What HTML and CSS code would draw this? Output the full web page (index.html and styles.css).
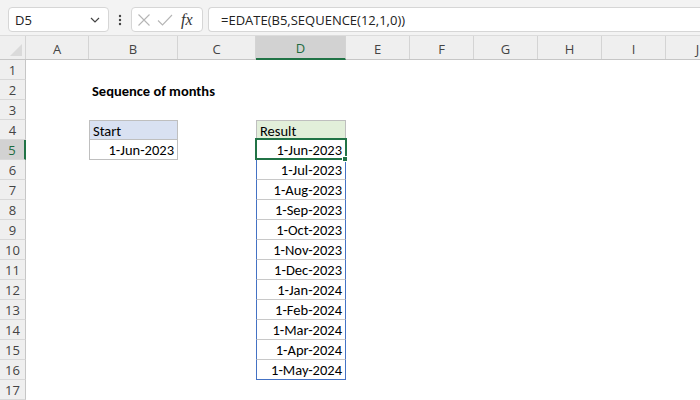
FILE: index.html
```html
<!DOCTYPE html>
<html>
<head>
<meta charset="utf-8">
<link rel="stylesheet" href="styles.css">
</head>
<body>
<div class="app">
  <div class="toolbar">
    <div class="namebox">
      <span class="ref">D5</span>
      <svg class="chev" width="10" height="6" viewBox="0 0 10 6"><path d="M1 1 L5 5 L9 1" fill="none" stroke="#444" stroke-width="1.2"/></svg>
    </div>
    <div class="dots">
      <svg width="4" height="12" viewBox="0 0 4 12"><circle cx="2" cy="2" r="1.2" fill="#444"/><circle cx="2" cy="6" r="1.2" fill="#444"/><circle cx="2" cy="10" r="1.2" fill="#444"/></svg>
    </div>
    <div class="fxbox">
      <svg class="ico" width="14" height="14" viewBox="0 0 14 14"><path d="M1.5 1.5 L12.5 12.5 M12.5 1.5 L1.5 12.5" stroke="#b5b5b5" stroke-width="1.1" fill="none"/></svg>
      <svg class="ico" width="16" height="14" viewBox="0 0 16 14"><path d="M1 7.5 L5.5 12 L15 2" stroke="#b5b5b5" stroke-width="1.1" fill="none"/></svg>
      <span class="fx">fx</span>
    </div>
    <div class="formula">=EDATE(B5,SEQUENCE(12,1,0))</div>
  </div>

  <div class="colheads">
    <div class="corner">
      <svg width="12" height="12" viewBox="0 0 12 12"><path d="M12 0 L12 12 L0 12 Z" fill="#dadada"/></svg>
    </div>
    <div class="ch ca">A</div>
    <div class="ch cb">B</div>
    <div class="ch cc">C</div>
    <div class="ch cd sel">D</div>
    <div class="ch ce">E</div>
    <div class="ch ce">F</div>
    <div class="ch ce">G</div>
    <div class="ch ce">H</div>
    <div class="ch ce">I</div>
    <div class="ch ce">J</div>
  </div>

  <div class="sheet">
    <div class="row"><div class="rh">1</div><div class="c ca"></div><div class="c cb"></div><div class="c cc"></div><div class="c cd"></div></div>
    <div class="row"><div class="rh">2</div><div class="c ca"></div><div class="c cb title">Sequence of months</div><div class="c cc"></div><div class="c cd"></div></div>
    <div class="row"><div class="rh">3</div><div class="c ca"></div><div class="c cb"></div><div class="c cc"></div><div class="c cd"></div></div>
    <div class="row"><div class="rh">4</div><div class="c ca"></div><div class="c cb hdr-blue">Start</div><div class="c cc"></div><div class="c cd hdr-green">Result</div></div>
    <div class="row"><div class="rh selrow">5</div><div class="c ca"></div><div class="c cb box num">1-Jun-2023</div><div class="c cc"></div><div class="c cd spill num active">1-Jun-2023</div></div>
    <div class="row"><div class="rh">6</div><div class="c ca"></div><div class="c cb"></div><div class="c cc"></div><div class="c cd spill num">1-Jul-2023</div></div>
    <div class="row"><div class="rh">7</div><div class="c ca"></div><div class="c cb"></div><div class="c cc"></div><div class="c cd spill num">1-Aug-2023</div></div>
    <div class="row"><div class="rh">8</div><div class="c ca"></div><div class="c cb"></div><div class="c cc"></div><div class="c cd spill num">1-Sep-2023</div></div>
    <div class="row"><div class="rh">9</div><div class="c ca"></div><div class="c cb"></div><div class="c cc"></div><div class="c cd spill num">1-Oct-2023</div></div>
    <div class="row"><div class="rh">10</div><div class="c ca"></div><div class="c cb"></div><div class="c cc"></div><div class="c cd spill num">1-Nov-2023</div></div>
    <div class="row"><div class="rh">11</div><div class="c ca"></div><div class="c cb"></div><div class="c cc"></div><div class="c cd spill num">1-Dec-2023</div></div>
    <div class="row"><div class="rh">12</div><div class="c ca"></div><div class="c cb"></div><div class="c cc"></div><div class="c cd spill num">1-Jan-2024</div></div>
    <div class="row"><div class="rh">13</div><div class="c ca"></div><div class="c cb"></div><div class="c cc"></div><div class="c cd spill num">1-Feb-2024</div></div>
    <div class="row"><div class="rh">14</div><div class="c ca"></div><div class="c cb"></div><div class="c cc"></div><div class="c cd spill num">1-Mar-2024</div></div>
    <div class="row"><div class="rh">15</div><div class="c ca"></div><div class="c cb"></div><div class="c cc"></div><div class="c cd spill num">1-Apr-2024</div></div>
    <div class="row"><div class="rh">16</div><div class="c ca"></div><div class="c cb"></div><div class="c cc"></div><div class="c cd spill last num">1-May-2024</div></div>
    <div class="row"><div class="rh">17</div><div class="c ca"></div><div class="c cb"></div><div class="c cc"></div><div class="c cd"></div></div>
  </div>
</div>
</body>
</html>
```

FILE: styles.css
```css
html, body {
  margin: 0;
  padding: 0;
  background: #ffffff;
  overflow: hidden;
}

.app {
  width: 700px;
  height: 400px;
  overflow: hidden;
  font-family: "Carlito", "Liberation Sans", sans-serif;
}

.toolbar {
  height: 35px;
  box-sizing: border-box;
  background: #f3f3f3;
  display: flex;
  align-items: flex-start;
  padding: 7px 0 0 8px;
  font-family: "Open Sans", "Noto Sans", sans-serif;
  font-size: 13px;
  color: #222;
}

.toolbar > * {
  flex: none;
}

.namebox {
  width: 101px;
  height: 25px;
  box-sizing: border-box;
  background: #fff;
  border: 1px solid #d6d6d6;
  border-radius: 4px;
  display: flex;
  align-items: center;
  justify-content: space-between;
  padding: 0 8px 0 6px;
}

.dots {
  width: 22px;
  height: 25px;
  display: flex;
  align-items: center;
  justify-content: center;
}

.fxbox {
  width: 72px;
  height: 25px;
  box-sizing: border-box;
  background: #fff;
  border: 1px solid #d6d6d6;
  border-radius: 4px;
  display: flex;
  align-items: center;
  padding: 0 0 0 5px;
  gap: 6px;
}

.fx {
  font-family: "Liberation Serif", serif;
  font-style: italic;
  font-size: 16px;
  color: #333;
  margin-left: 2px;
}

.formula {
  margin-left: 5px;
  width: 500px;
  height: 25px;
  box-sizing: border-box;
  background: #fff;
  border: 1px solid #d6d6d6;
  border-right: none;
  border-radius: 4px 0 0 4px;
  display: flex;
  align-items: center;
  padding-left: 12px;
  font-size: 13px;
  color: #222;
}

.colheads {
  display: flex;
  height: 25px;
  box-sizing: border-box;
  background: #efefef;
  border-top: 1px solid #dcdcdc;
  border-bottom: 1px solid #c6c6c6;
  font-family: "Open Sans", "Noto Sans", sans-serif;
  font-size: 13px;
  color: #444;
}

.corner {
  width: 26px;
  flex: none;
  box-sizing: border-box;
  border-right: 1px solid #d4d4d4;
  display: flex;
  align-items: flex-end;
  justify-content: flex-end;
  padding: 0 3px 3px 0;
}

.ch {
  flex: none;
  box-sizing: border-box;
  border-right: 1px solid #d4d4d4;
  display: flex;
  align-items: center;
  justify-content: center;
  padding-top: 2px;
}

.ch.sel {
  background: #d2d2d2;
  color: #1e6b40;
  border-bottom: 2px solid #217346;
  margin-bottom: -1px;
}

.ca { width: 63px; flex: none; }
.cb { width: 89px; flex: none; }
.cc { width: 78px; flex: none; }
.cd { width: 90px; flex: none; }
.ce { width: 64px; flex: none; }

.row {
  display: flex;
  height: 20px;
}

.rh {
  width: 26px;
  flex: none;
  box-sizing: border-box;
  background: #efefef;
  border-right: 1px solid #c6c6c6;
  border-bottom: 1px solid #d8d8d8;
  font-family: "Open Sans", "Noto Sans", sans-serif;
  font-size: 13px;
  color: #444;
  display: flex;
  align-items: center;
  justify-content: center;
  padding-top: 1px;
}

.rh.selrow {
  background: #d2d2d2;
  color: #1e6b40;
  border-right: 2px solid #217346;
}

.c {
  box-sizing: border-box;
  height: 20px;
  font-size: 14.5px;
  line-height: 20px;
  color: #000;
  white-space: nowrap;
  overflow: visible;
  padding: 1px 3px 0;
}

.title {
  font-weight: bold;
}

.num {
  text-align: right;
}

.hdr-blue {
  background: #d9e1f2;
  border: 1px solid #bfbfbf;
  line-height: 18px;
}

.hdr-green {
  background: #e2efda;
  border: 1px solid #bfbfbf;
  line-height: 18px;
}

.box {
  border-left: 1px solid #bfbfbf;
  border-right: 1px solid #bfbfbf;
  border-bottom: 1px solid #bfbfbf;
  line-height: 19px;
}

.spill {
  border-left: 1px solid #4472c4;
  border-right: 1px solid #4472c4;
  border-bottom: 1px solid #c8c8c8;
  line-height: 19px;
}

.spill.last {
  border-bottom: 1px solid #4472c4;
}

.active {
  position: relative;
}

.active::after {
  content: "";
  position: absolute;
  left: -2px;
  top: -2px;
  width: 92px;
  height: 22px;
  box-sizing: border-box;
  border: 2px solid #217346;
}

.active::before {
  content: "";
  position: absolute;
  right: -3px;
  bottom: -3px;
  width: 6px;
  height: 6px;
  box-sizing: border-box;
  background: #217346;
  border: 1px solid #fff;
  z-index: 2;
}
```
